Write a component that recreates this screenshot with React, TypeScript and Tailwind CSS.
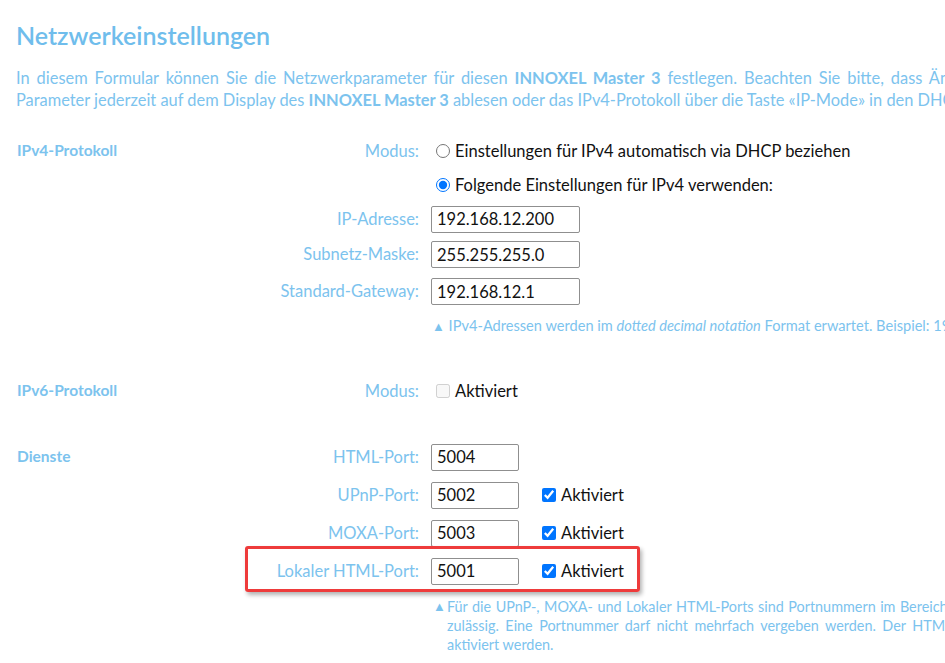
import React from 'react';

const blue = 'text-[#7cc3ee]';

function Row({
  section,
  label,
  h = 'h-[38px]',
  children,
  extra,
}: {
  section?: string;
  label?: string;
  h?: string;
  children?: React.ReactNode;
  extra?: React.ReactNode;
}) {
  return (
    <div className={`relative flex items-center ${h}`}>
      <div className="flex w-[403px] items-center justify-between">
        <span className={`pl-px text-[15.5px] font-bold ${blue}`}>{section}</span>
        <span className={`text-[16.5px] ${blue}`}>{label}</span>
      </div>
      <div className="ml-3 flex items-center">{children}</div>
      {extra}
    </div>
  );
}

function Field({value, wide}: {value: string; wide?: boolean}) {
  return (
    <input
      readOnly
      value={value}
      className={`h-[27px] ${wide ? 'w-[149px]' : 'w-[88px]'} rounded-[2px] border border-[#8f8f8f] bg-white px-[5px] text-[16.5px] text-[#111] outline-none`}
    />
  );
}

function Enabled() {
  return (
    <label className="ml-[23px] flex items-center gap-[5px] text-[16.5px] text-[#111]">
      <input type="checkbox" defaultChecked className="m-0 h-[14px] w-[14px]" />
      Aktiviert
    </label>
  );
}

export default function App() {
  return (
    <div className="h-[663px] w-[945px] overflow-hidden bg-white [font-family:Lato,'Open_Sans',sans-serif]">
      <div className="w-[1400px] pl-4">
        <h1 className="pt-[19px] text-[25px] leading-[32px] font-semibold text-[#6fbdec]">Netzwerkeinstellungen</h1>

        <div className={`mt-[16px] text-[16.4px] leading-[22px] whitespace-nowrap ${blue}`}>
          <div className="[word-spacing:2.8px]">
            In diesem Formular können Sie die Netzwerkparameter für diesen <b>INNOXEL Master 3</b> festlegen. Beachten Sie
            bitte, dass Änderungen erst nach einem Neustart wirksam werden. Sie können die aktuellen
          </div>
          <div>
            Parameter jederzeit auf dem Display des <b>INNOXEL Master 3</b> ablesen oder das IPv4-Protokoll über die Taste
            «IP-Mode» in den DHCP-Modus umschalten.
          </div>
        </div>

        <div className="mt-[23px]">
          <Row section="IPv4-Protokoll" label="Modus:" h="h-[34px]">
            <label className="flex items-center gap-[5px] text-[16.5px] text-[#111]">
              <input type="radio" name="mode" className="m-0 ml-[5px] h-[14px] w-[14px]" />
              Einstellungen für IPv4 automatisch via DHCP beziehen
            </label>
          </Row>
          <Row h="h-[34px]">
            <label className="flex items-center gap-[5px] text-[16.5px] text-[#111]">
              <input type="radio" name="mode" defaultChecked className="m-0 ml-[5px] h-[14px] w-[14px]" />
              Folgende Einstellungen für IPv4 verwenden:
            </label>
          </Row>
          <Row label="IP-Adresse:" h="h-[34px]">
            <Field value="192.168.12.200" wide />
          </Row>
          <Row label="Subnetz-Maske:" h="h-[37px]">
            <Field value="255.255.255.0" wide />
          </Row>
          <Row label="Standard-Gateway:" h="h-[37px]">
            <Field value="192.168.12.1" wide />
          </Row>
          <Row h="h-[32px]">
            <span className={`ml-px text-[14.6px] whitespace-nowrap ${blue}`}>
              <span className="text-[13px]">▲</span> IPv4-Adressen werden im <i>dotted decimal notation</i> Format erwartet.
              Beispiel: 192.168.1.100
            </span>
          </Row>

          <div className="mt-[32px]">
            <Row section="IPv6-Protokoll" label="Modus:" h="h-[34px]">
              <label className="flex items-center gap-[5px] text-[16.5px] text-[#111]">
                <input type="checkbox" disabled className="m-0 ml-[5px] h-[14px] w-[14px]" />
                Aktiviert
              </label>
            </Row>
          </div>

          <div className="mt-[30px]">
            <Row section="Dienste" label="HTML-Port:">
              <Field value="5004" />
            </Row>
            <Row label="UPnP-Port:">
              <Field value="5002" />
              <Enabled />
            </Row>
            <Row label="MOXA-Port:">
              <Field value="5003" />
              <Enabled />
            </Row>
            <Row
              label="Lokaler HTML-Port:"
              extra={
                <div className="pointer-events-none absolute top-[-6px] left-[229px] h-[46px] w-[395px] rounded-[3px] border-[3px] border-[#ee3b3b] shadow-[2px_3px_4px_rgba(0,0,0,0.3)]" />
              }
            >
              <Field value="5001" />
              <Enabled />
            </Row>
          </div>

          <div className={`mt-[7px] ml-[417px] flex text-[14.4px] leading-[19px] whitespace-nowrap ${blue}`}>
            <span className="w-[14px] text-[13px]">▲</span>
            <div>
              <div className="[word-spacing:0.8px]">
                Für die UPnP-, MOXA- und Lokaler HTML-Ports sind Portnummern im Bereich von 1024 bis 65535
              </div>
              <div className="[word-spacing:2.8px]">
                zulässig. Eine Portnummer darf nicht mehrfach vergeben werden. Der HTML-Port muss immer
              </div>
              <div>aktiviert werden.</div>
            </div>
          </div>
        </div>
      </div>
    </div>
  );
}
